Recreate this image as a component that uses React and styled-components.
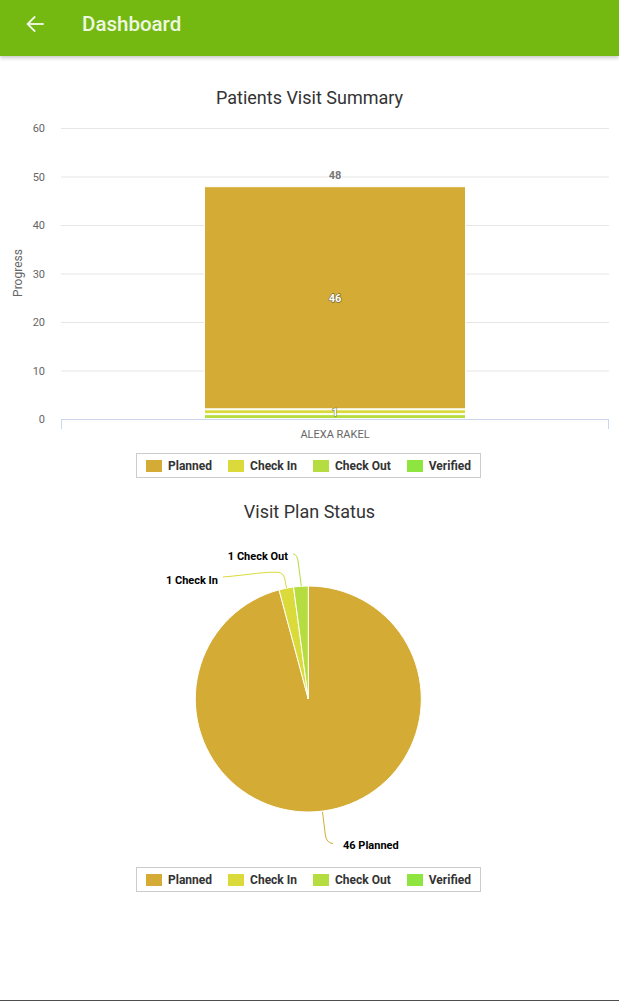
import React from "react";
import styled, { createGlobalStyle } from "styled-components";

const COLORS = {
  planned: "#d4ac35",
  checkIn: "#dadb3a",
  checkOut: "#b6dd3f",
  verified: "#8ee53f",
};

const LEGEND = [
  { key: "planned", label: "Planned" },
  { key: "checkIn", label: "Check In" },
  { key: "checkOut", label: "Check Out" },
  { key: "verified", label: "Verified" },
];

const GlobalStyle = createGlobalStyle`
  * { box-sizing: border-box; }
  html, body { margin: 0; padding: 0; background: #fff; }
  body { font-family: Roboto, "Liberation Sans", Arial, sans-serif; }
`;

const Page = styled.div`
  height: 1001px;
  display: flex;
  flex-direction: column;
  border-bottom: 1px solid #4d4d4d;
  overflow: hidden;
`;

const Header = styled.header`
  height: 56px;
  flex: none;
  display: flex;
  align-items: center;
  padding: 0 0 8px 24px;
  background: #74b912;
  box-shadow: 0 2px 4px rgba(0, 0, 0, 0.22);
  position: relative;
  z-index: 1;
`;

const BackButton = styled.button`
  width: 22px;
  height: 22px;
  padding: 0;
  border: 0;
  background: none;
  display: flex;
  align-items: center;
  justify-content: center;
  color: #f3f9ea;
  cursor: pointer;
`;

const HeaderTitle = styled.h1`
  margin: 0 0 0 36px;
  font-size: 20.5px;
  font-weight: 500;
  color: #eef7e1;
  line-height: 24px;
`;

const Main = styled.main`
  display: flex;
  flex-direction: column;
  align-items: stretch;
`;

const ChartCard = styled.section`
  display: flex;
  flex-direction: column;
  align-items: center;
  margin-top: ${(p) => p.$top}px;
`;

const ChartTitle = styled.h2`
  margin: 0;
  font-size: 18px;
  font-weight: 400;
  line-height: 22px;
  color: #333333;
  text-align: center;
  width: 100%;
`;

const Plot = styled.svg`
  display: block;
  width: 619px;
  height: 344px;
  font-family: Roboto, "Liberation Sans", Arial, sans-serif;
`;

const LegendBox = styled.div`
  height: 25px;
  display: inline-flex;
  align-items: center;
  gap: 16px;
  padding: 0 9px;
  border: 1px solid #cccccc;
  transform: translateX(-1px);
`;

const LegendItem = styled.div`
  display: flex;
  align-items: center;
  gap: 6px;
`;

const Swatch = styled.span`
  width: 16px;
  height: 12px;
  background: ${(p) => p.$color};
`;

const LegendLabel = styled.span`
  font-size: 12px;
  font-weight: 700;
  color: #333333;
  line-height: 14px;
`;

function Legend() {
  return (
    <LegendBox>
      {LEGEND.map((l) => (
        <LegendItem key={l.key}>
          <Swatch $color={COLORS[l.key]} />
          <LegendLabel>{l.label}</LegendLabel>
        </LegendItem>
      ))}
    </LegendBox>
  );
}

function BarChart() {
  const base = 310;
  const unit = 4.85;
  const y = (v) => base - v * unit;
  const ticks = [0, 10, 20, 30, 40, 50, 60];
  const barX = 204;
  const barW = 262;
  const segs = [
    { from: 2, to: 48, color: COLORS.planned },
    { from: 1, to: 2, color: COLORS.checkIn },
    { from: 0, to: 1, color: COLORS.checkOut },
  ];
  return (
    <Plot viewBox="0 0 619 344">
      {ticks.map((t) =>
        t === 0 ? null : (
          <line key={t} x1="61" x2="609" y1={y(t) + 0.5} y2={y(t) + 0.5} stroke="#e6e6e6" strokeWidth="1" />
        )
      )}
      {ticks.map((t) => (
        <text key={"l" + t} x="45" y={y(t) + 4} textAnchor="end" fontSize="11" fill="#666666">
          {t}
        </text>
      ))}
      <text
        x="0"
        y="0"
        transform={`translate(22 ${164}) rotate(-90)`}
        textAnchor="middle"
        fontSize="12"
        fill="#666666"
      >
        Progress
      </text>
      {segs.map((s, i) => (
        <rect
          key={i}
          x={barX + 0.5}
          y={y(s.to) + 0.5}
          width={barW - 1}
          height={(s.to - s.from) * unit - 1}
          fill={s.color}
          stroke="#ffffff"
          strokeWidth="1"
        />
      ))}
      <line x1="61" x2="609" y1={base + 0.5} y2={base + 0.5} stroke="#ccd6eb" strokeWidth="1" />
      <line x1="61.5" x2="61.5" y1={base} y2={base + 10} stroke="#ccd6eb" strokeWidth="1" />
      <line x1="608.5" x2="608.5" y1={base} y2={base + 10} stroke="#ccd6eb" strokeWidth="1" />
      <text x="335" y="70" textAnchor="middle" fontSize="11" fontWeight="700" fill="#777777" stroke="#ffffff" strokeWidth="2" paintOrder="stroke">
        48
      </text>
      <text x="335" y="193" textAnchor="middle" fontSize="11" fontWeight="700" fill="#ffffff" stroke="#7a6a35" strokeWidth="1.4" paintOrder="stroke" strokeLinejoin="round">
        46
      </text>
      <text x="335" y="307" textAnchor="middle" fontSize="11" fontWeight="700" fill="#ffffff" stroke="#7d8740" strokeWidth="1.2" paintOrder="stroke" strokeLinejoin="round">
        1
      </text>
      <text x="335" y="329" textAnchor="middle" fontSize="11" fill="#666666">
        ALEXA RAKEL
      </text>
    </Plot>
  );
}

function slicePath(cx, cy, r, a0, a1) {
  const rad = (a) => (a * Math.PI) / 180;
  const x0 = cx + r * Math.sin(rad(a0));
  const y0 = cy - r * Math.cos(rad(a0));
  const x1 = cx + r * Math.sin(rad(a1));
  const y1 = cy - r * Math.cos(rad(a1));
  const large = a1 - a0 > 180 ? 1 : 0;
  return `M ${cx} ${cy} L ${x0} ${y0} A ${r} ${r} 0 ${large} 1 ${x1} ${y1} Z`;
}

function PieChart() {
  const cx = 308.3;
  const cy = 176;
  const r = 113;
  const total = 48;
  const data = [
    { v: 46, color: COLORS.planned },
    { v: 1, color: COLORS.checkIn },
    { v: 1, color: COLORS.checkOut },
  ];
  let acc = 0;
  const slices = data.map((d) => {
    const a0 = (acc / total) * 360;
    acc += d.v;
    const a1 = (acc / total) * 360;
    return { ...d, a0, a1 };
  });
  const labelProps = {
    fontSize: 11,
    fontWeight: 700,
    fill: "#000000",
    stroke: "#ffffff",
    strokeWidth: 2,
    paintOrder: "stroke",
    strokeLinejoin: "round",
  };
  return (
    <Plot viewBox="0 0 619 344">
      {slices.map((s, i) => (
        <path key={i} d={slicePath(cx, cy, r, s.a0, s.a1)} fill={s.color} stroke="#ffffff" strokeWidth="1" strokeLinejoin="round" />
      ))}
      <path d="M 293 31 Q 297.5 31 298.3 40 L 301.3 63" fill="none" stroke={COLORS.checkOut} strokeWidth="1" />
      <path d="M 223 54 C 248 52 268 48 280 49.5 Q 284 51 284.8 56 L 286.5 65" fill="none" stroke={COLORS.checkIn} strokeWidth="1" />
      <path d="M 322.5 289 L 325.5 313 Q 327 320 333 320.5" fill="none" stroke={COLORS.planned} strokeWidth="1" />
      <text x="288" y="37" textAnchor="end" {...labelProps}>
        1 Check Out
      </text>
      <text x="218" y="61" textAnchor="end" {...labelProps}>
        1 Check In
      </text>
      <text x="343" y="326" textAnchor="start" {...labelProps}>
        46 Planned
      </text>
    </Plot>
  );
}

function ArrowBack() {
  return (
    <svg width="22" height="22" viewBox="0 0 24 24" fill="none" stroke="currentColor" strokeWidth="2" strokeLinecap="square">
      <path d="M20.5 12H4.5" />
      <path d="M11.5 4.5 4 12l7.5 7.5" />
    </svg>
  );
}

export default function App() {
  return (
    <>
      <GlobalStyle />
      <Page>
        <Header>
          <BackButton aria-label="Back">
            <ArrowBack />
          </BackButton>
          <HeaderTitle>Dashboard</HeaderTitle>
        </Header>
        <Main>
          <ChartCard $top={31}>
            <ChartTitle>Patients Visit Summary</ChartTitle>
            <BarChart />
            <Legend />
          </ChartCard>
          <ChartCard $top={23}>
            <ChartTitle>Visit Plan Status</ChartTitle>
            <PieChart />
            <Legend />
          </ChartCard>
        </Main>
      </Page>
    </>
  );
}
